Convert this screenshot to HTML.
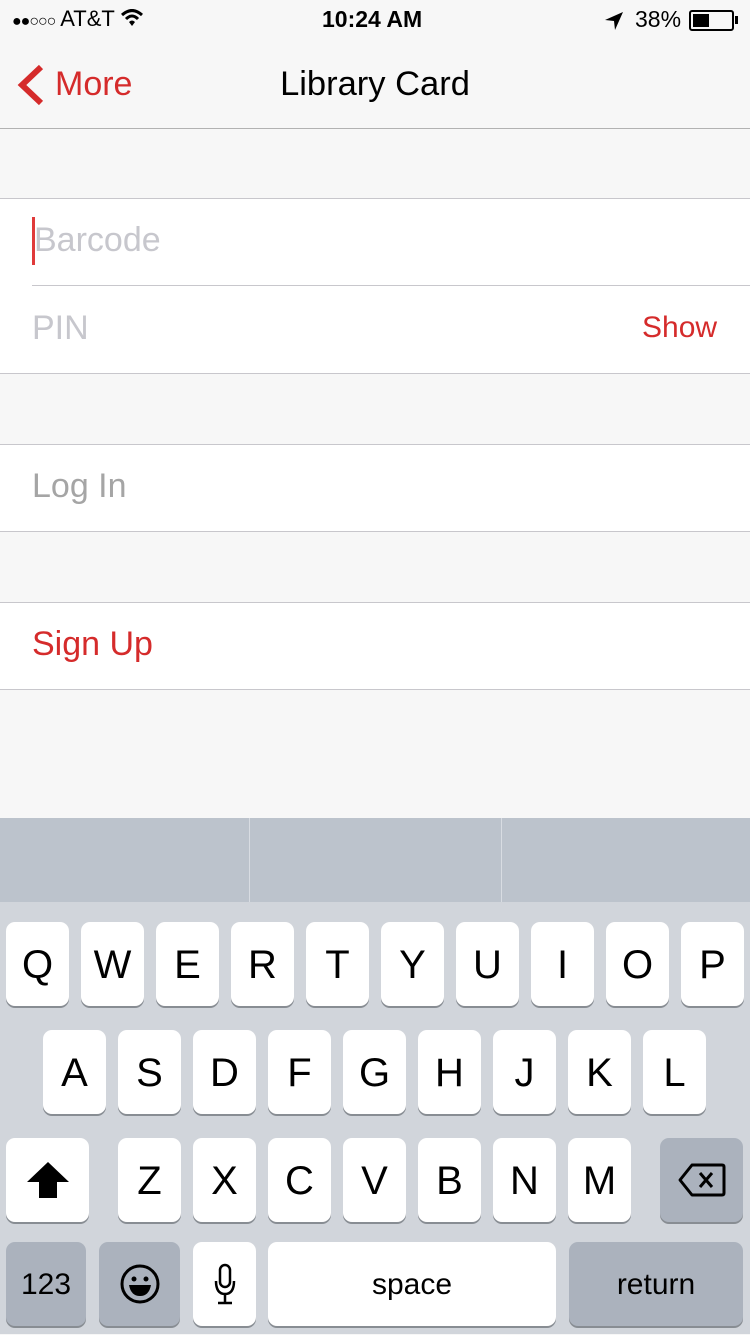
<!DOCTYPE html>
<html><head><meta charset="utf-8"><style>
*{margin:0;padding:0;box-sizing:border-box}
body{width:750px;height:1334px;position:relative;background:#f7f7f7;font-family:"Liberation Sans",sans-serif;overflow:hidden}
.a{position:absolute}
.w{position:absolute;left:0;width:750px;background:#fff;border-top:1px solid #c8c7cc;border-bottom:1px solid #c8c7cc}
.k{position:absolute;width:63px;height:84px;background:#fff;border-radius:9px;box-shadow:0 2px 0 #888d93;font-size:40px;text-align:center;line-height:86px;color:#000}
.d{background:#abb2bd}
</style></head><body>
<div class="a" style="left:12px;top:6px;font-size:22px;">
<span style="font-size:16px;letter-spacing:-1px">●●○○○</span> AT&amp;T
<svg width="22" height="18" viewBox="0 0 22 18" style="vertical-align:-1px"><path d="M1 6 Q11 -3 21 6" stroke="#000" stroke-width="3" fill="none"/><path d="M5 10 Q11 4 17 10" stroke="#000" stroke-width="3" fill="none"/><path d="M8 13 L11 17 L14 13 Q11 10 8 13Z" fill="#000"/></svg></div>
<div class="a" style="left:322px;top:6px;font-size:23px;font-weight:600;">10:24 AM</div>
<svg class="a" style="left:604px;top:11px" width="20" height="20" viewBox="0 0 20 20"><path d="M19 1 L1 9 L10 10 L11 19Z" fill="#000"/></svg>
<div class="a" style="left:635px;top:6px;font-size:23px;">38%</div>
<div class="a" style="left:689px;top:10px;width:45px;height:21px;border:2px solid #000;border-radius:3px;"><div style="width:16px;height:13px;background:#000;margin:2px"></div></div>
<div class="a" style="left:735px;top:16px;width:3px;height:8px;background:#000"></div>
<svg class="a" style="left:16px;top:64px" width="28" height="42" viewBox="0 0 28 42"><path d="M25 3 L6 21 L25 39" stroke="#d52b2b" stroke-width="6" fill="none"/></svg>
<div class="a" style="left:55px;top:65px;font-size:34px;color:#d52b2b">More</div>
<div class="a" style="left:0;width:750px;top:65px;font-size:34.5px;text-align:center;">Library Card</div>
<div class="a" style="left:0;top:128px;width:750px;height:1px;background:#b2b2b2"></div>
<div class="w" style="top:198px;height:176px"></div>
<div class="a" style="left:32px;top:285px;width:718px;height:1px;background:#c8c7cc"></div>
<div class="a" style="left:32px;top:217px;width:3px;height:48px;background:#e03a3a"></div>
<div class="a" style="left:34px;top:221px;font-size:34px;color:#c7c7cd">Barcode</div>
<div class="a" style="left:32px;top:309px;font-size:34px;color:#c7c7cd">PIN</div>
<div class="a" style="left:642px;top:311px;font-size:30px;color:#d52b2b">Show</div>
<div class="w" style="top:444px;height:88px"></div>
<div class="a" style="left:32px;top:467px;font-size:34px;color:#a5a5a5">Log In</div>
<div class="w" style="top:602px;height:88px"></div>
<div class="a" style="left:32px;top:625px;font-size:34px;color:#d52b2b">Sign Up</div>
<div class="a" style="left:0;top:818px;width:750px;height:516px;background:#d1d5db"></div>
<div class="a" style="left:0;top:818px;width:750px;height:84px;background:#bcc3cc"></div>
<div class="a" style="left:249px;top:818px;width:1px;height:84px;background:#d8dce2"></div>
<div class="a" style="left:501px;top:818px;width:1px;height:84px;background:#d8dce2"></div>
<div class="k" style="left:6px;top:922px">Q</div><div class="k" style="left:81px;top:922px">W</div><div class="k" style="left:156px;top:922px">E</div><div class="k" style="left:231px;top:922px">R</div><div class="k" style="left:306px;top:922px">T</div><div class="k" style="left:381px;top:922px">Y</div><div class="k" style="left:456px;top:922px">U</div><div class="k" style="left:531px;top:922px">I</div><div class="k" style="left:606px;top:922px">O</div><div class="k" style="left:681px;top:922px">P</div>
<div class="k" style="left:43px;top:1030px">A</div><div class="k" style="left:118px;top:1030px">S</div><div class="k" style="left:193px;top:1030px">D</div><div class="k" style="left:268px;top:1030px">F</div><div class="k" style="left:343px;top:1030px">G</div><div class="k" style="left:418px;top:1030px">H</div><div class="k" style="left:493px;top:1030px">J</div><div class="k" style="left:568px;top:1030px">K</div><div class="k" style="left:643px;top:1030px">L</div>
<div class="k" style="left:6px;top:1138px;width:83px"><svg width="46" height="40" viewBox="0 0 46 40" style="margin-top:22px"><path d="M23 2 L44 22 L32 22 L32 38 L14 38 L14 22 L2 22Z" fill="#000"/></svg></div>
<div class="k" style="left:118px;top:1138px">Z</div><div class="k" style="left:193px;top:1138px">X</div><div class="k" style="left:268px;top:1138px">C</div><div class="k" style="left:343px;top:1138px">V</div><div class="k" style="left:418px;top:1138px">B</div><div class="k" style="left:493px;top:1138px">N</div><div class="k" style="left:568px;top:1138px">M</div>
<div class="k d" style="left:660px;top:1138px;width:83px"><svg width="48" height="34" viewBox="0 0 48 34" style="margin-top:25px"><path d="M14 2 H44 Q46 2 46 4 V30 Q46 32 44 32 H14 L2 17Z" stroke="#000" stroke-width="3" fill="none" stroke-linejoin="round"/><path d="M22 10 L34 24 M34 10 L22 24" stroke="#000" stroke-width="3"/></svg></div>
<div class="k d" style="left:6px;top:1242px;width:80px;font-size:30px">123</div>
<div class="k d" style="left:99px;top:1242px;width:81px"><svg width="40" height="40" viewBox="0 0 40 40" style="margin-top:22px"><circle cx="20" cy="20" r="18" stroke="#000" stroke-width="3" fill="none"/><circle cx="14" cy="15" r="2.5"/><circle cx="26" cy="15" r="2.5"/><path d="M9 21 H31 Q29 32 20 32 Q11 32 9 21Z"/></svg></div>
<div class="k" style="left:193px;top:1242px"><svg width="24" height="42" viewBox="0 0 24 42" style="margin-top:21px"><rect x="7" y="2" width="10" height="22" rx="5" stroke="#000" stroke-width="2.5" fill="none"/><path d="M3 18 Q3 31 12 31 Q21 31 21 18 M12 31 V39 M5 40 H19" stroke="#000" stroke-width="2.5" fill="none"/></svg></div>
<div class="k" style="left:268px;top:1242px;width:288px;font-size:30px">space</div>
<div class="k d" style="left:569px;top:1242px;width:174px;font-size:30px">return</div>
</body></html>
